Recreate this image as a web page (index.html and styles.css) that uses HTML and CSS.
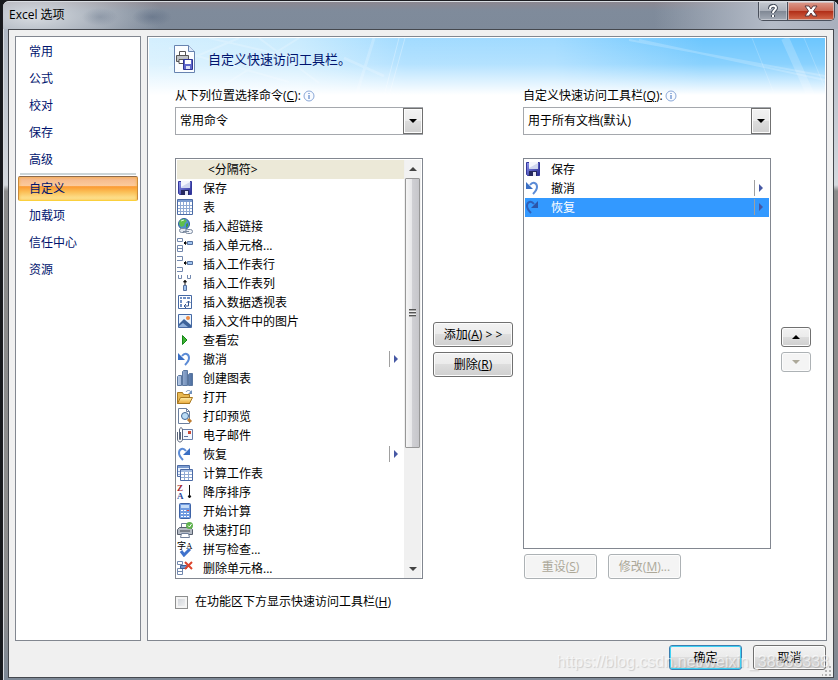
FILE: index.html
```html
<!DOCTYPE html>
<html lang="zh-CN">

<head>
    <meta charset="UTF-8">
    <meta name="viewport" content="width=device-width, initial-scale=1.0">
    <title>Excel 选项</title>
    <link rel="stylesheet" href="styles.css">
</head>

<body>
    <!-- icons -->
    <svg class="defs" width="0" height="0" aria-hidden="true">
        <defs>
            <linearGradient id="g_blue" x1="0" y1="0" x2="1" y2="1">
                <stop offset="0" stop-color="#8f95ee" />
                <stop offset="1" stop-color="#23288f" />
            </linearGradient>
            <linearGradient id="g_bar" x1="0" y1="0" x2="1" y2="0">
                <stop offset="0" stop-color="#b9cce8" />
                <stop offset="1" stop-color="#4a6c9f" />
            </linearGradient>
            <linearGradient id="g_folder" x1="0" y1="0" x2="0" y2="1">
                <stop offset="0" stop-color="#ffefad" />
                <stop offset="1" stop-color="#e9a93b" />
            </linearGradient>
        </defs>

        <symbol id="i_save" viewBox="0 0 16 16">
            <path d="M1.500 1.500h13v13h-12l-1-1z" fill="url(#g_blue)" stroke="#34389c" />
            <path d="M4 1h9v7H4z" fill="#f4f6fc" />
            <path d="M4 7l9-5v6H4z" fill="#cfd6ee" />
            <path d="M4 10h8v5H4z" fill="#26295e" />
            <path d="M8 11h3v4H8z" fill="#e4e7f5" />
        </symbol>
        <symbol id="i_table" viewBox="0 0 16 16">
            <path d="M0.500 0.500h15v15H0.500z" fill="#fff" stroke="#4b6aa5" />
            <path d="M1 1h14v2H1z" fill="#7b9bcf" />
            <path d="M1 6.500h14M1 9.500h14M1 12.500h14M3.500 3v12M6.500 3v12M9.500 3v12M12.500 3v12" stroke="#8fa9d3" fill="none" />
        </symbol>
        <symbol id="i_link" viewBox="0 0 16 16">
            <circle cx="7" cy="6" r="5.500" fill="#4f8fd0" stroke="#2e609b" />
            <path d="M3 2l4-1 3 2-2 2-1 3-3 1-2-3z" fill="#5fbf4c" />
            <path d="M9 6l2-1v3l-2 2z" fill="#3f9a3c" />
            <path d="M4 3l3-1" stroke="#d8f3d2" />
            <rect x="2.500" y="10.500" width="7" height="4" rx="2" fill="#dfe5ee" stroke="#7d8ba0" />
            <rect x="8.500" y="11.500" width="7" height="4" rx="2" fill="#eef2f8" stroke="#7d8ba0" />
            <path d="M6 13.500h6" stroke="#7d8ba0" />
        </symbol>
        <symbol id="i_cells" viewBox="0 0 16 16">
            <path d="M0.500 1.500h5v3h-5zM0.500 8.500h5v6h-5zM0.500 11.500h5" fill="#fff" stroke="#7288ae" />
            <path d="M10.500 4.500h5v3h-5z" fill="#9fc3ee" stroke="#55709f" />
            <path d="M7 6h3M8.500 4.500v3L7 6z" stroke="#111" fill="#111" />
        </symbol>
        <symbol id="i_rows" viewBox="0 0 16 16">
            <path d="M0 0.500h5.500v4H0M0 11.500h5.500v4H0" fill="#fff" stroke="#7288ae" />
            <path d="M10.500 5.500h5v3h-5z" fill="#9fc3ee" stroke="#55709f" />
            <path d="M7 7h3M8.500 5.500v3L7 7z" stroke="#111" fill="#111" />
        </symbol>
        <symbol id="i_cols" viewBox="0 0 16 16">
            <path d="M1.500 0v3.500h3V0M10.500 0v3.500h3V0" fill="#fff" stroke="#7288ae" />
            <path d="M6.500 10.500h3v5h-3z" fill="#9fc3ee" stroke="#55709f" />
            <path d="M8 5v5M6.500 7L8 5.500 9.500 7z" stroke="#111" fill="#111" />
        </symbol>
        <symbol id="i_pivot" viewBox="0 0 16 16">
            <path d="M1.500 1.500h13v13h-13z" fill="#fff" stroke="#4669a4" />
            <path d="M3 3h2v2H3zM6 3h3v2H6zM10 3h3v2h-3zM3 6h2v3H3zM3 10h2v3H3z" fill="#6f8fc4" />
            <path d="M7 12h4.500V7M9 10l-2 2 2 2M9.500 9l2-2 2 2" fill="none" stroke="#34558f" />
        </symbol>
        <symbol id="i_image" viewBox="0 0 16 16">
            <path d="M1.500 1.500h13v13h-13z" fill="#e8f3ff" stroke="#4669a4" />
            <path d="M2 11l5-5 7 6v2H2z" fill="#3c6299" />
            <path d="M2 13l4-3 5 4H2z" fill="#8fb0dc" />
            <circle cx="11" cy="5" r="2" fill="#ec8b45" />
        </symbol>
        <symbol id="i_play" viewBox="0 0 16 16">
            <path d="M5.500 3.500v9L10 8z" fill="#3eb134" stroke="#16871a" />
        </symbol>
        <symbol id="i_undo" viewBox="0 0 16 16">
            <path class="arrow_tail" d="M5 5C8 1 12 3 12 7c0 3-2 5-4 7" />
            <path class="arrow_head" d="M1 2v7h7z" />
        </symbol>
        <symbol id="i_redo" viewBox="0 0 16 16">
            <path class="arrow_tail" d="M9 5C6 1 2 3 2 7c0 3 2 5 4 7" />
            <path class="arrow_head" d="M13 2v7H6z" />
        </symbol>
        <symbol id="i_chart" viewBox="0 0 16 16">
            <path d="M0.500 6.500l1-1h3v10h-4zM5.500 1.500l1-1h4v15h-5zM11.500 4.500l1-1h3v12h-4z" fill="url(#g_bar)" stroke="#5b779f" />
        </symbol>
        <symbol id="i_open" viewBox="0 0 16 16">
            <path d="M0.500 14.500v-11h5l1 2h6v9z" fill="#e8b851" stroke="#a87821" />
            <path d="M0.500 14.500l3-6h12l-3 6z" fill="url(#g_folder)" stroke="#a87821" />
            <path d="M9 3c1-2 4-2 5 0" fill="none" stroke="#6f91bd" />
            <path d="M15 1v4h-4z" fill="#6f91bd" />
        </symbol>
        <symbol id="i_preview" viewBox="0 0 16 16">
            <path d="M1.500 0.500h8l3 3v12h-11z" fill="#fff" stroke="#6b7f9f" />
            <path d="M9.500 0.500v3h3" fill="none" stroke="#6b7f9f" />
            <circle cx="8" cy="8" r="3.500" fill="#b9dbf5" stroke="#456794" />
            <path d="M11 11l3 3" stroke="#bd7c2f" stroke-width="3" />
        </symbol>
        <symbol id="i_mail" viewBox="0 0 16 16">
            <path d="M5.500 2.500h10v10h-10z" fill="#f5f8ff" stroke="#6a7fa8" />
            <path d="M11 4h3v3h-3z" fill="#cb4a35" />
            <path d="M7 9.500h4" stroke="#5f7298" />
            <path d="M0.500 5v7c0 4 5 4 5 0V3c0-3-3-3-3 0v9c0 1 1 1 1 0V5" fill="none" stroke="#59657b" />
        </symbol>
        <symbol id="i_calcsheet" viewBox="0 0 16 16">
            <path d="M0.500 0.500h12v11h-12z" fill="#eaf2ff" stroke="#4b6aa5" />
            <path d="M1 1h11v2H1z" fill="#7b9bcf" />
            <path d="M1 6.500h3M1 9.500h3" stroke="#8fa9d3" />
            <path d="M3.500 4.500h12v11h-12z" fill="#fff" stroke="#4b6aa5" />
            <path d="M4 5h11v2H4z" fill="#a5bde2" />
            <path d="M4 9.500h11M4 12.500h11M7.500 7v8M11.500 7v8" stroke="#8fa9d3" />
        </symbol>
        <symbol id="i_sort" viewBox="0 0 16 16">
            <path d="M12.500 1v12M11 12h3l-1.500 2z" stroke="#111" fill="#111" />
            <text x="0" y="7" class="glyph glyph_z">Z</text>
            <text x="0" y="15" class="glyph glyph_a">A</text>
        </symbol>
        <symbol id="i_calc" viewBox="0 0 16 16">
            <rect x="2.500" y="0.500" width="11" height="15" rx="1" fill="#709be0" stroke="#3e63a6" />
            <path d="M4 2h8v3H4z" fill="#c5dcf7" />
            <path d="M4 7h2v1H4zM7 7h2v1H7zM4 10h2v1H4zM7 10h2v1H7zM4 13h2v1H4zM7 13h2v1H7zM10 10h2v1h-2zM10 13h2v1h-2z" fill="#fff" />
            <path d="M10 7h2v1h-2z" fill="#e2473c" />
        </symbol>
        <symbol id="i_print" viewBox="0 0 16 16">
            <path d="M4.500 6V1.500h7V6" fill="#fff" stroke="#71809a" />
            <path d="M0.500 7.500l2-2h11l2 2v5h-15z" fill="#b4bac4" stroke="#565e6c" />
            <path d="M3 9h10" stroke="#40464f" />
            <path d="M4.500 11.500h7l1 4h-9z" fill="#fff" stroke="#71809a" />
            <circle cx="12.500" cy="3.500" r="3.500" fill="#5eb14d" />
            <path d="M11 3.500l1.500 1.500 2-3" fill="none" stroke="#fff" />
        </symbol>
        <symbol id="i_spell" viewBox="0 0 16 16">
            <path d="M4 10l3 4 6-6" fill="none" stroke="#3f72cc" stroke-width="3" />
            <text x="0" y="8" class="glyph glyph_s">字A</text>
        </symbol>
        <symbol id="i_delcells" viewBox="0 0 16 16">
            <path d="M0.500 1.500h5v3h-5zM0.500 8.500h5v6h-5zM0.500 11.500h5" fill="#fff" stroke="#7288ae" />
            <path d="M3.500 5.500h6v3h-6z" fill="#6d93ce" stroke="#3f5e94" />
            <path d="M8 2l7 7M15 2L8 9" stroke="#dd432b" stroke-width="2" />
        </symbol>
        <symbol id="i_info" viewBox="0 0 12 12">
            <circle cx="6" cy="6" r="5" fill="#f8fbff" stroke="#8ba9d8" />
            <path d="M6 5v4M6 3v1" stroke="#3c6fbe" />
        </symbol>
        <symbol id="i_up" viewBox="0 0 8 4">
            <path d="M0 4l4-4 4 4z" fill="currentColor" />
        </symbol>
        <symbol id="i_down" viewBox="0 0 8 4">
            <path d="M0 0h8L4 4z" fill="currentColor" />
        </symbol>
        <symbol id="i_sub" viewBox="0 0 9 16">
            <path d="M0.500 0v16" stroke="#a0a0a0" />
            <path d="M5 4v8l4-4z" fill="#4658a4" />
        </symbol>
    </svg>

    <div class="dialog">
        <header class="titlebar">
            <h1 class="title">Excel 选项</h1>
            <div class="caption_buttons">
                <button class="caption_btn" aria-label="帮助">
                    <svg width="12" height="14" viewBox="0 0 12 14">
                        <path d="M3 5c0-4 6-4 6-1 0 2-3 2-3 5M6 11v2" fill="none" stroke="#444c5a" stroke-width="4" />
                        <path d="M3 5c0-4 6-4 6-1 0 2-3 2-3 5M6 11v2" fill="none" stroke="#fff" stroke-width="2" />
                    </svg>
                </button>
                <button class="caption_btn caption_close" aria-label="关闭">
                    <svg width="14" height="12" viewBox="0 0 14 12">
                        <path d="M1 1h4l2 3 2-3h4L9.500 6l3.500 5H9L7 8l-2 3H1l3.500-5z" fill="#fff" stroke="#5a3a40" />
                    </svg>
                </button>
            </div>
        </header>

        <main class="client">
            <div class="columns">
                <nav class="sidebar">
                    <a class="nav_item" href="#">常用</a>
                    <a class="nav_item" href="#">公式</a>
                    <a class="nav_item" href="#">校对</a>
                    <a class="nav_item" href="#">保存</a>
                    <a class="nav_item" href="#">高级</a>
                    <hr class="nav_line">
                    <a class="nav_item nav_selected" href="#">自定义</a>
                    <a class="nav_item" href="#">加载项</a>
                    <a class="nav_item" href="#">信任中心</a>
                    <a class="nav_item" href="#">资源</a>
                </nav>

                <section class="panel">
                    <svg class="banner" viewBox="0 0 676 58" preserveAspectRatio="none" aria-hidden="true">
                        <g stroke="#fff" fill="none">
                            <path d="M250 0L235 58M256 0l-16 58" opacity="0.300" />
                            <path d="M60 0l130 30M90 0L20 30M150 0L70 50M110 0l60 45M20 10l120 34" opacity="0.200" stroke-width="2" />
                            <path d="M195 20l40 18M225 0l-18 58" opacity="0.200" stroke-width="3" />
                            <path d="M480 2l196 36M490 2l186 40" opacity="0.200" stroke-width="2" />
                            <path d="M603 0l23 58M655 0l21 50" opacity="0.200" />
                            <path d="M636 0l26 58" opacity="0.200" stroke-width="8" />
                        </g>
                    </svg>

                    <div class="heading">
                        <svg class="heading_icon" width="24" height="30" viewBox="0 0 24 30">
                            <path d="M1.500 1.500h14l6 6v21h-20z" fill="#fbfdff" stroke="#6783b0" />
                            <path d="M15.500 1.500v6h6" fill="#dce8f8" stroke="#6783b0" />
                            <path d="M6.500 11V7.500h6V11" fill="#fff" stroke="#555" />
                            <path d="M3.500 11.500h12v6h-12z" fill="#bfc2c6" stroke="#555" />
                            <path d="M6 15.500h6v4H6z" fill="#fff" stroke="#555" />
                            <path d="M10.500 15.500h9v10h-9z" fill="#5f68cc" stroke="#2f3592" />
                            <path d="M12 16h6v4h-6z" fill="#fff" />
                            <path d="M13 22h4v3h-4z" fill="#dfe3f8" />
                        </svg>
                        <h2 class="heading_text">自定义快速访问工具栏。</h2>
                    </div>

                    <div class="customize">
                        <div class="field field_from">
                            <label class="field_label" for="from">从下列位置选择命令(<u>C</u>):<svg class="info" width="12" height="12"><use href="#i_info" /></svg></label>
                            <div class="combo">
                                <select id="from" class="combo_select">
                                    <option>常用命令</option>
                                </select>
                                <span class="combo_arrow"><svg width="8" height="4"><use href="#i_down" /></svg></span>
                            </div>
                        </div>
                        <div class="field field_to">
                            <label class="field_label" for="to">自定义快速访问工具栏(<u>Q</u>):<svg class="info" width="12" height="12"><use href="#i_info" /></svg></label>
                            <div class="combo">
                                <select id="to" class="combo_select">
                                    <option>用于所有文档(默认)</option>
                                </select>
                                <span class="combo_arrow"><svg width="8" height="4"><use href="#i_down" /></svg></span>
                            </div>
                        </div>

                        <div class="listbox list_from">
                            <ul class="list" role="listbox" aria-label="常用命令">
                                <li class="row row_separator" role="option" aria-selected="true">&lt;分隔符&gt;</li>
                                <li class="row" role="option"><svg class="icon"><use href="#i_save" /></svg>保存</li>
                                <li class="row" role="option"><svg class="icon"><use href="#i_table" /></svg>表</li>
                                <li class="row" role="option"><svg class="icon"><use href="#i_link" /></svg>插入超链接</li>
                                <li class="row" role="option"><svg class="icon"><use href="#i_cells" /></svg>插入单元格...</li>
                                <li class="row" role="option"><svg class="icon"><use href="#i_rows" /></svg>插入工作表行</li>
                                <li class="row" role="option"><svg class="icon"><use href="#i_cols" /></svg>插入工作表列</li>
                                <li class="row" role="option"><svg class="icon"><use href="#i_pivot" /></svg>插入数据透视表</li>
                                <li class="row" role="option"><svg class="icon"><use href="#i_image" /></svg>插入文件中的图片</li>
                                <li class="row" role="option"><svg class="icon"><use href="#i_play" /></svg>查看宏</li>
                                <li class="row" role="option"><svg class="icon"><use href="#i_undo" /></svg>撤消<svg class="sub"><use href="#i_sub" /></svg></li>
                                <li class="row" role="option"><svg class="icon"><use href="#i_chart" /></svg>创建图表</li>
                                <li class="row" role="option"><svg class="icon"><use href="#i_open" /></svg>打开</li>
                                <li class="row" role="option"><svg class="icon"><use href="#i_preview" /></svg>打印预览</li>
                                <li class="row" role="option"><svg class="icon"><use href="#i_mail" /></svg>电子邮件</li>
                                <li class="row" role="option"><svg class="icon"><use href="#i_redo" /></svg>恢复<svg class="sub"><use href="#i_sub" /></svg></li>
                                <li class="row" role="option"><svg class="icon"><use href="#i_calcsheet" /></svg>计算工作表</li>
                                <li class="row" role="option"><svg class="icon"><use href="#i_sort" /></svg>降序排序</li>
                                <li class="row" role="option"><svg class="icon"><use href="#i_calc" /></svg>开始计算</li>
                                <li class="row" role="option"><svg class="icon"><use href="#i_print" /></svg>快速打印</li>
                                <li class="row" role="option"><svg class="icon"><use href="#i_spell" /></svg>拼写检查...</li>
                                <li class="row" role="option"><svg class="icon"><use href="#i_delcells" /></svg>删除单元格...</li>
                            </ul>
                            <div class="scrollbar">
                                <button class="scroll_btn" aria-label="向上滚动"><svg width="8" height="4"><use href="#i_up" /></svg></button>
                                <div class="scroll_thumb"><span class="grip"></span></div>
                                <div class="scroll_track"></div>
                                <button class="scroll_btn" aria-label="向下滚动"><svg width="8" height="4"><use href="#i_down" /></svg></button>
                            </div>
                        </div>

                        <div class="transfer">
                            <button class="btn">添加(<u>A</u>) &gt; &gt;</button>
                            <button class="btn">删除(<u>R</u>)</button>
                        </div>

                        <div class="target">
                            <div class="listbox list_to">
                                <ul class="list" role="listbox" aria-label="快速访问工具栏">
                                    <li class="row" role="option"><svg class="icon"><use href="#i_save" /></svg>保存</li>
                                    <li class="row" role="option"><svg class="icon"><use href="#i_undo" /></svg>撤消<svg class="sub"><use href="#i_sub" /></svg></li>
                                    <li class="row row_selected" role="option" aria-selected="true"><svg class="icon"><use href="#i_redo" /></svg>恢复<svg class="sub"><use href="#i_sub" /></svg></li>
                                </ul>
                            </div>
                            <div class="target_buttons">
                                <button class="btn" disabled>重设(<u>S</u>)</button>
                                <button class="btn" disabled>修改(<u>M</u>)...</button>
                            </div>
                        </div>

                        <div class="order">
                            <button class="btn btn_order" aria-label="上移"><svg width="8" height="4"><use href="#i_up" /></svg></button>
                            <button class="btn btn_order" aria-label="下移" disabled><svg width="8" height="4"><use href="#i_down" /></svg></button>
                        </div>
                    </div>

                    <label class="check">
                        <input class="check_box" type="checkbox">
                        <span>在功能区下方显示快速访问工具栏(<u>H</u>)</span>
                    </label>
                </section>
            </div>

            <footer class="footer">
                <button class="btn btn_default">确定</button>
                <button class="btn">取消</button>
            </footer>
            <svg class="resize" width="10" height="10" viewBox="0 0 10 10" aria-hidden="true">
                <path d="M7 0h2v2H7zM7 4h2v2H7zM7 8h2v2H7zM3 4h2v2H3zM3 8h2v2H3zM0 8h1v2H0z" fill="#b4b4b4" />
            </svg>
            <div class="watermark">https://blog.csdn.net/weixin_38883338</div>
        </main>
    </div>
</body>

</html>
```

FILE: styles.css
```css
* {
    box-sizing: border-box;
}

body,
html {
    margin: 0;
    padding: 0;
}

body {
    --border: #828790;
    --navy: #00146e;
    --arrow_head: #3a6fc4;
    --arrow_tail: #5b8bd6;

    min-height: 100vh;
    display: flex;
    padding-left: 2px;
    background-color: #17191d;
    font-family: "Open Sans", "Noto Sans CJK SC", sans-serif;
    font-size: 12px;
    line-height: 16px;
    color: #000;
}

button,
select,
input {
    font: inherit;
    color: inherit;
    margin: 0;
}

ul {
    margin: 0;
    padding: 0;
    list-style: none;
}

.defs {
    position: absolute;
}

.dialog {
    flex: 1;
    display: flex;
    flex-direction: column;
    padding: 0 4px 2px 5px;
    border: 1px solid #1c1c20;
    border-bottom: 0;
    border-right: 0;
    border-radius: 7px 7px 0 0;
    background: linear-gradient(to bottom, #a9b2bf 0, #d5d9de 184px, #8b8b8b 190px, #8e8e8e 90%, #7d8896 100%);
    box-shadow: inset 1px 1px 0 #d9dde2;
}

/* title bar */
.titlebar {
    display: flex;
    justify-content: space-between;
    align-items: flex-start;
    height: 28px;
    margin: 0 -4px 0 -5px;
    padding-left: 6px;
    border-radius: 6px 6px 0 0;
    border-top: 1px solid #d9dde2;
    background:
        radial-gradient(ellipse 18px 9px at 97px 15px, #67758a66, #67758a00),
        radial-gradient(ellipse 20px 9px at 149px 15px, #5c6b8299, #5c6b8200),
        radial-gradient(ellipse 130px 46px at 30px 14px, #d8dce1, #d8dce100),
        linear-gradient(to right, #7f8b9b00 78%, #b5bcc8 92%, #a9b0bd),
        linear-gradient(to bottom, #8c8790, #7f8b9b 9px, #7e8a9a);
}

.title {
    margin: 0;
    padding-top: 4px;
    font-size: 12px;
    font-weight: normal;
    line-height: 18px;
}

.caption_buttons {
    display: flex;
    margin-right: 3px;
    border: 1px solid #4a505c;
    border-top: 0;
    border-radius: 0 0 5px 5px;
    overflow: hidden;
}

.caption_btn {
    display: flex;
    align-items: center;
    justify-content: center;
    width: 28px;
    height: 18px;
    padding: 0;
    border: 0;
    background: linear-gradient(to bottom, #c6cad1, #abb1bb 48%, #7f8794 50%, #a4abb6);
    box-shadow: inset 0 0 0 1px #d5d9df99;
}

.caption_close {
    width: 47px;
    border-left: 1px solid #4a505c;
    background: linear-gradient(to bottom, #dc9a8c, #cb6753 48%, #b02c16 50%, #d4694b);
}

/* client area */
.client {
    position: relative;
    flex: 1;
    display: flex;
    flex-direction: column;
    padding: 6px 6px 0;
    border: 1px solid #45484e;
    background-color: #f0f0f0;
}

.columns {
    flex: 1;
    display: grid;
    grid-template-columns: 126px 1fr;
    gap: 6px;
}

.sidebar,
.panel {
    border: 1px solid var(--border);
    background-color: #fff;
}

.sidebar {
    padding: 1px 2px;
}

.nav_item {
    display: block;
    padding-left: 11px;
    line-height: 27px;
    color: var(--navy);
    text-decoration: none;
}

.nav_line {
    height: 2px;
    margin: 0 2px;
    border: 0;
    background-color: #ccd5d8;
}

.nav_selected {
    margin: 1px 0;
    padding-left: 10px;
    line-height: 23px;
    border: 1px solid #c98a3c;
    border-top-color: #8d6a4c;
    border-bottom-color: #fbd03c;
    border-radius: 2px;
    background: linear-gradient(to bottom, #f3b488, #fccb9c 38%, #fb9a33 42%, #fbbf57 65%, #fdeb9f);
    box-shadow: inset 0 0 3px #f8b030;
}

.panel {
    position: relative;
    padding: 1px 15px 0 27px;
    background:
        linear-gradient(to bottom, #ffffff00, #ffffff33 26px, #fff 57px) 1px 1px / calc(100% - 2px) 58px no-repeat,
        linear-gradient(to right, #d4effe, #c9ebfe 22%, #a2dbff 38%, #a0daff 60%, #6cc6fe 82%, #6cc6fe) 1px 1px / calc(100% - 2px) 57px no-repeat,
        #fff;
}

.banner {
    position: absolute;
    top: 1px;
    left: 1px;
    width: calc(100% - 2px);
    height: 58px;
}

.heading {
    position: relative;
    display: flex;
    align-items: center;
    gap: 11px;
    height: 42px;
    margin-left: -2px;
}

.heading_text {
    margin: 0;
    font-size: 13px;
    font-weight: normal;
    line-height: 18px;
    color: var(--navy);
}

.customize {
    position: relative;
    display: grid;
    grid-template-columns: 1fr 80px 1fr 30px;
    column-gap: 10px;
    row-gap: 23px;
    padding-top: 8px;
}

.field_from,
.list_from {
    grid-column: 1;
}

.field_to,
.target {
    grid-column: 3;
}

.field_label {
    display: flex;
    align-items: center;
    height: 16px;
    margin-bottom: 3px;
}

.info {
    margin-left: 2px;
}

.combo {
    position: relative;
}

.combo_select {
    display: block;
    width: 100%;
    height: 28px;
    padding: 0 24px 0 4px;
    border: 1px solid #a5a8ad;
    border-radius: 0;
    background-color: #fff;
    appearance: none;
}

.combo_arrow {
    position: absolute;
    top: 1px;
    right: 0;
    bottom: 1px;
    display: flex;
    align-items: center;
    justify-content: center;
    width: 20px;
    border: 1px solid #707070;
    background: linear-gradient(to bottom, #f2f2f2, #ebebeb 49%, #dddddd 50%, #cfcfcf);
    box-shadow: inset 0 0 0 1px #fcfcfc;
    pointer-events: none;
}

/* lists */
.listbox {
    display: flex;
    padding: 1px;
    border: 1px solid var(--border);
    background-color: #fff;
}

.list_from {
    padding-bottom: 0;
}

.list {
    flex: 1;
}

.row {
    display: flex;
    align-items: center;
    gap: 10px;
    height: 19px;
}

.row_separator {
    padding-left: 31px;
    background-color: #ece9d8;
}

.row_selected {
    --arrow_head: #2c55a8;
    --arrow_tail: #2f5fb8;

    color: #fff;
    background-color: #3399ff;
}

.icon {
    flex-shrink: 0;
    width: 16px;
    height: 16px;
    margin-bottom: 1px;
}

.arrow_tail {
    fill: none;
    stroke: var(--arrow_tail);
    stroke-width: 2px;
}

.arrow_head {
    fill: var(--arrow_head);
}

.sub {
    width: 9px;
    height: 16px;
    margin-left: auto;
    margin-right: 6px;
    margin-bottom: 1px;
}

.glyph {
    font-family: "Liberation Serif", "Noto Sans CJK SC", serif;
    font-size: 9px;
    font-weight: bold;
}

.glyph_z {
    fill: #a0252c;
}

.glyph_a {
    fill: #2b4a9b;
}

.glyph_s {
    font-weight: normal;
}

.scrollbar {
    display: flex;
    flex-direction: column;
    width: 17px;
    padding: 0 1px;
    background-color: #f0f0f0;
}

.scroll_btn {
    display: flex;
    align-items: center;
    justify-content: center;
    height: 18px;
    padding: 0;
    border: 0;
    color: #444;
    background-color: #f2f2f2;
}

.scroll_thumb {
    flex: 269;
    display: flex;
    align-items: center;
    justify-content: center;
    border: 1px solid #979797;
    border-radius: 1px;
    background: linear-gradient(to right, #f5f5f5, #e6e6e8 48%, #cfcfd3 50%, #c6c6ca);
}

.scroll_track {
    flex: 113;
}

.grip {
    width: 7px;
    height: 8px;
    background: repeating-linear-gradient(to bottom, #555 0, #555 1px, #aaa 1px, #aaa 2px, #eee 2px, #eee 3px);
}

.transfer,
.order {
    display: flex;
    flex-direction: column;
}

.transfer {
    gap: 5px;
    padding-top: 164px;
}

.order {
    gap: 5px;
    padding-top: 169px;
}

.target {
    display: flex;
    flex-direction: column;
    gap: 5px;
}

.list_to {
    flex: 1;
    align-items: flex-start;
}

.target_buttons {
    display: flex;
    gap: 11px;
    padding-left: 1px;
}

/* buttons */
.btn {
    height: 25px;
    padding: 0;
    border: 1px solid #707070;
    border-radius: 3px;
    background: linear-gradient(to bottom, #f2f2f2, #ebebeb 49%, #dddddd 50%, #cfcfcf);
    box-shadow: inset 0 0 0 1px #fcfcfc;
}

.btn:disabled {
    border-color: #adb2b5;
    color: #aca899;
    background: #f4f4f4;
}

.target_buttons .btn,
.footer .btn {
    width: 73px;
}

.btn_order {
    display: flex;
    align-items: center;
    justify-content: center;
    height: 20px;
}

.btn_default {
    border-color: #3c7fb1;
    box-shadow: inset 0 0 0 1px #3fd2f5;
}

.check {
    display: flex;
    align-items: center;
    gap: 7px;
    width: max-content;
    margin-top: 15px;
}

.check_box {
    width: 13px;
    height: 13px;
    border: 1px solid #8e8f8f;
    background: linear-gradient(135deg, #cbcfd5, #f6f6f6);
    box-shadow: inset 0 0 0 2px #f4f4f4;
    appearance: none;
}

.footer {
    display: flex;
    justify-content: flex-end;
    align-items: flex-start;
    gap: 11px;
    height: 36px;
    padding: 4px 1px 0 0;
}

.resize {
    position: absolute;
    right: 1px;
    bottom: 1px;
}

.watermark {
    position: absolute;
    right: 4px;
    bottom: 5px;
    font-family: "Liberation Sans", sans-serif;
    font-size: 16px;
    line-height: 20px;
    color: #ffffff99;
    text-shadow: 1px 1px 1px #00000026;
    pointer-events: none;
}
```
